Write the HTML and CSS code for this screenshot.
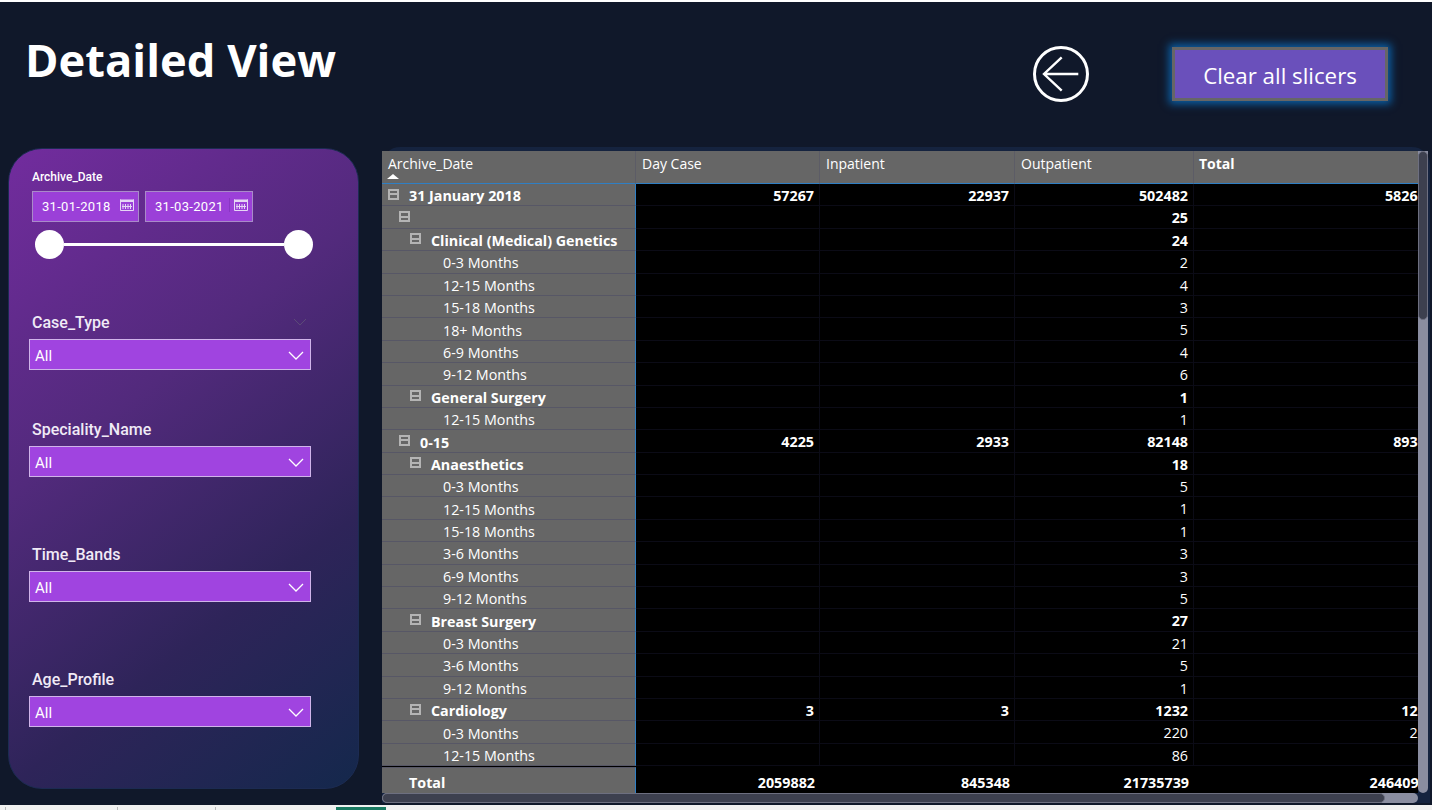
FILE: index.html
```html
<!DOCTYPE html>
<html lang="en">
<head>
  <meta charset="UTF-8" />
  <title>Detailed View</title>
  <link rel="stylesheet" href="styles.css">
</head>
<body>
  <div class="page">
    <header class="top">
      <h1>Detailed View</h1>
      <svg class="back" viewBox="0 0 56 56" width="56" height="56" aria-label="Back">
        <circle cx="28" cy="28" r="26.5" />
        <path d="M45.3 28H11M28.7 11.3 11 28 28.7 44.7" />
      </svg>
      <button class="clear">Clear all slicers</button>
    </header>

    <main class="content">
      <aside class="slicers">
        <div class="date-slicer">
          <div class="date-label">Archive_Date</div>
          <div class="date-inputs">
            <div class="date-box"><span>31-01-2018</span><svg class="cal" viewBox="0 0 14 14"><path class="cal-top" d="M0 1.5h14v2.5H0z" /><path d="M.5 1.5v11h13v-11" /><path d="M3 6v5M5.5 6v5M8 6v5M10.5 6v5M2 8.5h10" /></svg></div>
            <div class="date-box wide"><span>31-03-2021</span><svg class="cal" viewBox="0 0 14 14"><path class="cal-top" d="M0 1.5h14v2.5H0z" /><path d="M.5 1.5v11h13v-11" /><path d="M3 6v5M5.5 6v5M8 6v5M10.5 6v5M2 8.5h10" /></svg></div>
          </div>
          <div class="range"><i></i><b></b><i></i></div>
        </div>

        <div class="slicer first">
          <div class="slicer-title">Case_Type<svg class="ghost" viewBox="0 0 14 8"><path d="M1 1l6 6 6-6" /></svg></div>
          <div class="dropdown"><span>All</span><svg viewBox="0 0 16 9"><path d="M1 1l7 7 7-7" /></svg></div>
        </div>
        <div class="slicer second">
          <div class="slicer-title">Speciality_Name</div>
          <div class="dropdown"><span>All</span><svg viewBox="0 0 16 9"><path d="M1 1l7 7 7-7" /></svg></div>
        </div>
        <div class="slicer third">
          <div class="slicer-title">Time_Bands</div>
          <div class="dropdown"><span>All</span><svg viewBox="0 0 16 9"><path d="M1 1l7 7 7-7" /></svg></div>
        </div>
        <div class="slicer third">
          <div class="slicer-title">Age_Profile</div>
          <div class="dropdown"><span>All</span><svg viewBox="0 0 16 9"><path d="M1 1l7 7 7-7" /></svg></div>
        </div>
      </aside>

      <section class="matrix-wrap">
        <div class="matrix">
          <div class="row head">
            <div class="rh">Archive_Date<em class="sort"></em></div><div>Day Case</div><div>Inpatient</div><div>Outpatient</div><div class="bold">Total</div>
          </div>
          <div class="rows">
            <div class="row b"><div class="rh l0"><u></u>31 January 2018</div><div>57267</div><div>22937</div><div>502482</div><div>582686</div></div>
            <div class="row b"><div class="rh l1"><u></u></div><div></div><div></div><div>25</div><div></div></div>
            <div class="row b"><div class="rh l2"><u></u>Clinical (Medical) Genetics</div><div></div><div></div><div>24</div><div></div></div>
            <div class="row"><div class="rh l3">0-3 Months</div><div></div><div></div><div>2</div><div></div></div>
            <div class="row"><div class="rh l3">12-15 Months</div><div></div><div></div><div>4</div><div></div></div>
            <div class="row"><div class="rh l3">15-18 Months</div><div></div><div></div><div>3</div><div></div></div>
            <div class="row"><div class="rh l3">18+ Months</div><div></div><div></div><div>5</div><div></div></div>
            <div class="row"><div class="rh l3">6-9 Months</div><div></div><div></div><div>4</div><div></div></div>
            <div class="row"><div class="rh l3">9-12 Months</div><div></div><div></div><div>6</div><div></div></div>
            <div class="row b"><div class="rh l2"><u></u>General Surgery</div><div></div><div></div><div>1</div><div></div></div>
            <div class="row"><div class="rh l3">12-15 Months</div><div></div><div></div><div>1</div><div></div></div>
            <div class="row b"><div class="rh l1"><u></u>0-15</div><div>4225</div><div>2933</div><div>82148</div><div>89306</div></div>
            <div class="row b"><div class="rh l2"><u></u>Anaesthetics</div><div></div><div></div><div>18</div><div></div></div>
            <div class="row"><div class="rh l3">0-3 Months</div><div></div><div></div><div>5</div><div></div></div>
            <div class="row"><div class="rh l3">12-15 Months</div><div></div><div></div><div>1</div><div></div></div>
            <div class="row"><div class="rh l3">15-18 Months</div><div></div><div></div><div>1</div><div></div></div>
            <div class="row"><div class="rh l3">3-6 Months</div><div></div><div></div><div>3</div><div></div></div>
            <div class="row"><div class="rh l3">6-9 Months</div><div></div><div></div><div>3</div><div></div></div>
            <div class="row"><div class="rh l3">9-12 Months</div><div></div><div></div><div>5</div><div></div></div>
            <div class="row b"><div class="rh l2"><u></u>Breast Surgery</div><div></div><div></div><div>27</div><div></div></div>
            <div class="row"><div class="rh l3">0-3 Months</div><div></div><div></div><div>21</div><div></div></div>
            <div class="row"><div class="rh l3">3-6 Months</div><div></div><div></div><div>5</div><div></div></div>
            <div class="row"><div class="rh l3">9-12 Months</div><div></div><div></div><div>1</div><div></div></div>
            <div class="row b"><div class="rh l2"><u></u>Cardiology</div><div>3</div><div>3</div><div>1232</div><div>1238</div></div>
            <div class="row"><div class="rh l3">0-3 Months</div><div></div><div></div><div>220</div><div>220</div></div>
            <div class="row"><div class="rh l3">12-15 Months</div><div></div><div></div><div>86</div><div></div></div>
          </div>
          <div class="row b total"><div class="rh l-total">Total</div><div>2059882</div><div>845348</div><div>21735739</div><div>24640969</div></div>
        </div>
        <div class="vbar"><span></span></div>
        <div class="hbar"><span></span></div>
      </section>
    </main>
  </div>
  <footer class="tabs"><i></i><i></i><i></i><b></b></footer>
</body>
</html>
```

FILE: styles.css
```css
* {
  box-sizing: border-box;
}
html,
body {
  height: 810px;
  margin: 0;
  overflow: hidden;
}
body {
  background: #f1f1f1;
  border-top: 2px solid #fff;
  color: #fff;
  font-family: "Open Sans", sans-serif;
}
.page {
  background: #10182a;
  height: 803px;
}

/* header */
.top {
  align-items: flex-start;
  display: flex;
  height: 145px;
  padding-left: 25px;
}
.top h1 {
  font-size: 45.3px;
  font-weight: 700;
  line-height: 60px;
  margin: 28px 0 0;
  width: 1008px;
}
.back {
  fill: none;
  margin-top: 44px;
  stroke: #fff;
  stroke-width: 3;
}
.back path {
  stroke-width: 2.4;
}
.clear {
  background: #6a50bb;
  border: 3.5px solid #666;
  box-shadow: 0 0 8px 3px #0b5fa5;
  color: #fff;
  font-family: "Open Sans", sans-serif;
  font-size: 22.3px;
  height: 54px;
  margin: 45px 0 0 83px;
  padding: 3px 0 0;
  width: 216px;
}

.content {
  display: flex;
  padding-left: 8px;
}

/* slicer panel */
.slicers {
  background: linear-gradient(142deg, #722c9e 0%, #522a7c 38%, #2e2459 70%, #14284c 100%);
  border: 1px solid #1c2b52;
  border-radius: 34px;
  height: 641px;
  margin-top: 1px;
  padding: 21px 0 0 20px;
  width: 351px;
}
.date-label {
  font-family: Roboto, sans-serif;
  font-size: 12px;
  font-weight: 500;
  line-height: 14px;
  margin-left: 3px;
}
.date-inputs {
  display: flex;
  gap: 6px;
  margin: 7px 0 0 3px;
}
.date-box {
  align-items: center;
  background: #9b40d8;
  border: 1px solid #a98ac9;
  display: flex;
  font-family: Roboto, sans-serif;
  font-size: 13px;
  height: 31px;
  justify-content: space-between;
  letter-spacing: .3px;
  padding: 0 4px 0 9px;
  width: 107px;
}
.date-box.wide {
  width: 108px;
}
.date-box.wide .cal {
  border-left: 1px solid #8a35c4;
  box-sizing: content-box;
  margin-left: 2px;
  padding-left: 4px;
}
.cal {
  fill: none;
  flex: none;
  height: 14px;
  margin-top: -3px;
  stroke: #e6d6f5;
  stroke-width: 1;
  width: 14px;
}
.cal-top {
  fill: #e6d6f5;
  stroke: none;
}
.range {
  align-items: center;
  display: flex;
  margin: 8px 0 0 6px;
  width: 278px;
}
.range i {
  background: #fff;
  border-radius: 50%;
  flex: none;
  height: 29px;
  width: 29px;
}
.range b {
  background: #fff;
  flex: 1;
  height: 3px;
}
.slicer {
  width: 282px;
}
.slicer.first {
  margin-top: 54px;
}
.slicer.second {
  margin-top: 50px;
}
.slicer.third {
  margin-top: 68px;
}
.slicer-title {
  align-items: center;
  color: #f0eaf6;
  display: flex;
  font-family: Roboto, sans-serif;
  font-size: 16px;
  font-weight: 500;
  height: 18px;
  justify-content: space-between;
  margin-bottom: 8px;
  padding: 0 4px 0 3px;
}
.ghost {
  fill: none;
  height: 8px;
  stroke: #5c4a78;
  stroke-width: 1;
  width: 14px;
}
.dropdown {
  align-items: center;
  background: #a044e0;
  border: 1px solid #d0b4ea;
  display: flex;
  font-family: Roboto, sans-serif;
  font-size: 15px;
  height: 31px;
  justify-content: space-between;
  padding: 3px 6px 0 5px;
  width: 282px;
}
.dropdown svg {
  fill: none;
  height: 9px;
  margin-top: -2px;
  stroke: #fff;
  stroke-width: 1.3;
  width: 16px;
}

/* matrix */
.matrix-wrap {
  background: #15233f;
  border-radius: 18px 18px 0 0;
  display: grid;
  grid-template-columns: 1036px 10px;
  grid-template-rows: 642px 10px;
  height: 656px;
  margin-left: 23px;
  padding-top: 4px;
  width: 1048px;
}
.matrix {
  background: #000;
  display: flex;
  flex-direction: column;
  overflow: hidden;
}
.row {
  display: grid;
  flex: none;
  font-size: 14.3px;
  grid-template-columns: 254px 184px 195px 179px 246px;
  height: 22.4px;
  width: 1058px;
}
.row > div {
  border-bottom: 1px solid #0b0b16;
  border-right: 1px solid #0b0b16;
  line-height: 21px;
  overflow: hidden;
  padding: 1px 5px 0 0;
  text-align: right;
  white-space: nowrap;
}
.row > .rh {
  align-items: center;
  background: #666;
  border-bottom: 1px solid #575766;
  border-right: 1px solid #2f7fc4;
  display: flex;
  padding: 2px 0 0;
  text-align: left;
}
.b {
  font-weight: 700;
}
.row > .rh.l0 {
  padding-left: 6px;
}
.row > .rh.l1 {
  padding-left: 17px;
}
.row > .rh.l2 {
  padding-left: 28px;
}
.row > .rh.l3 {
  padding-left: 61px;
}
.row > .rh.l-total {
  padding: 3px 0 0 27px;
}
.rh u {
  border: 2px solid #b4b4b4;
  flex: none;
  height: 11px;
  margin: -3px 10px 0 0;
  position: relative;
  width: 11px;
}
.rh u::after {
  background: #b4b4b4;
  content: "";
  height: 2px;
  left: 0;
  position: absolute;
  right: 0;
  top: 2.5px;
}
.row.head {
  background: #666;
  font-size: 14px;
  height: 33px;
}
.row.head > div {
  border-bottom: 1px solid #2f7fc4;
  border-right: 1px solid #5c5c66;
  line-height: 25px;
  padding: 0 0 0 6px;
  text-align: left;
}
.row.head > .rh {
  border-right-color: #5c5c66;
  display: block;
  padding: 0 0 0 6px;
  position: relative;
}
.row.head > .bold {
  border-right: 0;
  font-weight: 700;
  padding-left: 5px;
}
.sort {
  border-bottom: 5px solid #fff;
  border-left: 6px solid transparent;
  border-right: 6px solid transparent;
  bottom: 4px;
  left: 5px;
  position: absolute;
}
.rows {
  flex: 1;
  overflow: hidden;
}
.row.total {
  height: 26px;
}
.row.total > div {
  border-bottom: 0;
  border-right: 0;
  line-height: 27px;
  padding-top: 2px;
}
.row.total > .rh {
  border-bottom: 0;
  border-right: 1px solid #2f7fc4;
  border-top: 1px solid #575766;
}

/* scroll bars */
.vbar {
  background: #8a8da0;
  border-radius: 0 0 5px 5px;
}
.vbar span {
  background: #3d404f;
  border: 1px solid #6d6f80;
  border-radius: 5px;
  display: block;
  height: 169px;
}
.hbar {
  background: #8a8da0;
  border-radius: 5px;
}
.hbar span {
  background: #3d404f;
  border: 1px solid #6d6f80;
  border-radius: 5px;
  display: block;
  height: 10px;
  width: 1003px;
}

/* strip of the workbook tabs below the report */
.tabs {
  align-items: flex-end;
  display: flex;
  height: 5px;
}
.tabs i {
  border-left: 1px solid #bbb;
  height: 3px;
  margin-left: 5px;
  width: 112px;
}
.tabs i:nth-child(2) {
  margin-left: 0;
  width: 98px;
}
.tabs i:nth-child(3) {
  margin-left: 0;
  width: 121px;
}
.tabs b {
  background: #1a7a62;
  height: 3px;
  width: 50px;
}
```
